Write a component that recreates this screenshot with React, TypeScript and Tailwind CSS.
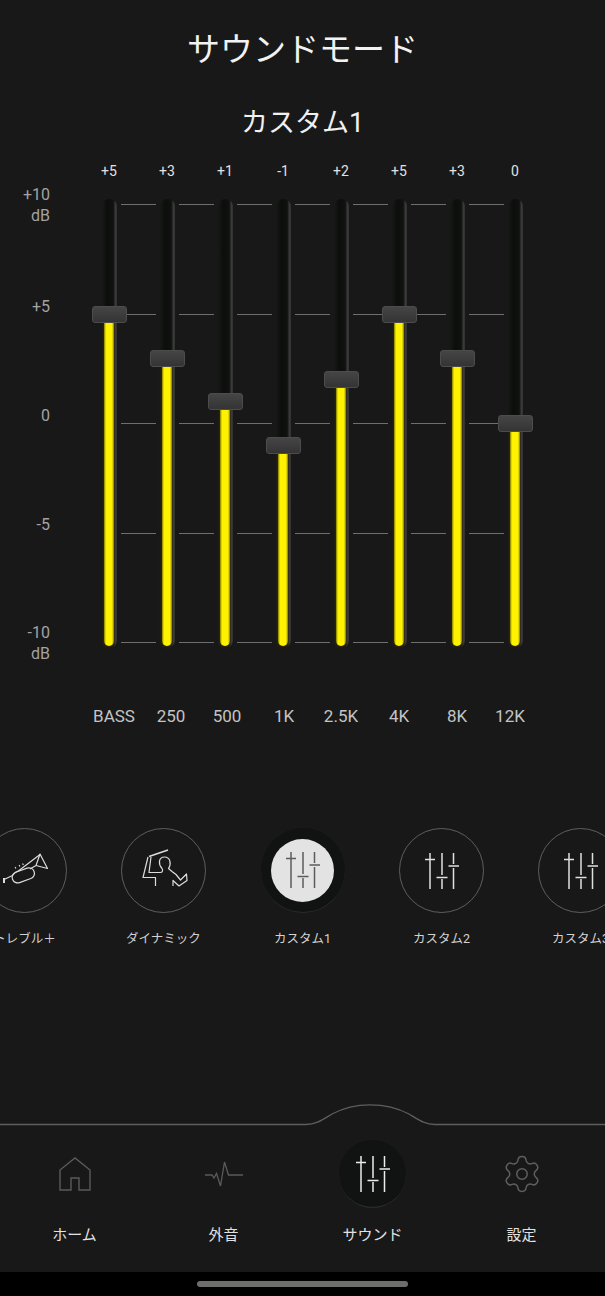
import { Settings } from "lucide-react";

const bands = [
  { value: 5, top: "+5", label: "BASS", labelW: "w-[58px]" },
  { value: 3, top: "+3", label: "250", labelW: "w-[56px]" },
  { value: 1, top: "+1", label: "500", labelW: "w-[56px]" },
  { value: -1, top: "-1", label: "1K", labelW: "w-[58px]" },
  { value: 2, top: "+2", label: "2.5K", labelW: "w-[56px]" },
  { value: 5, top: "+5", label: "4K", labelW: "w-[60px]" },
  { value: 3, top: "+3", label: "8K", labelW: "w-[56px]" },
  { value: 0, top: "0", label: "12K", labelW: "w-[50px]" },
];

function SlidersIcon({ className }: { className?: string }) {
  return (
    <svg width="36" height="36" viewBox="0 0 36 36" fill="none" stroke="currentColor" strokeWidth="1.5" className={className}>
      <path d="M6 0V36M18 0V22M18 26V36M29.5 0V11M29.5 15V36" />
      <path d="M1 6.5H11M12.5 24.5H23.5M24.5 13H35" />
    </svg>
  );
}

function TrumpetIcon() {
  return (
    <svg width="84" height="84" viewBox="0 0 84 84" fill="none" stroke="#dcdcdc" strokeWidth="1.2" strokeLinejoin="round" className="absolute inset-0">
      <path d="M57 25L64.5 39.5L53 36.5Z" />
      <path d="M57 25.5L36 41.5C33 42.5 31 44 29.5 46.5L21 50.5M53 36.5L47 40" />
      <rect x="29" y="41" width="23" height="11" rx="5.5" transform="rotate(-20 40 47)" />
      <path d="M21 49V54" strokeWidth="2" />
      <path d="M32 39L33 38.5M36 37L37 36.5M39.5 35.5L40.5 35" strokeWidth="1.8" />
    </svg>
  );
}

function DynamicIcon() {
  return (
    <svg width="84" height="84" viewBox="0 0 84 84" fill="none" stroke="#dcdcdc" strokeWidth="1.2" strokeLinejoin="round" className="absolute inset-0">
      <path d="M27 27.5L46 21" strokeWidth="1.6" />
      <path d="M26 28L21 48.5H33.5V57" />
      <path d="M29 28L27 43.5H38C41 43.5 41 41 40 39.5C36 35 36.5 28 42.5 28C48.5 28 49.5 35 46.5 39.5L50 42.5L54 45.5L58.5 51L64.5 45L65 51.5L57 57L51 51.5V57" />
    </svg>
  );
}

function ModeItem({ label, selected, icon }: { label: string; selected?: boolean; icon?: "trumpet" | "dynamic" }) {
  return (
    <div className="flex w-[139px] shrink-0 flex-col items-center">
      {selected ? (
        <div className="flex h-[85px] w-[84px] items-center justify-center rounded-full border-b border-[#2a2c2b] bg-[#111312]">
          <div className="flex h-[63px] w-[63px] items-center justify-center rounded-full bg-[#e3e3e3]">
            <SlidersIcon className="text-[#5c5c5c]" />
          </div>
        </div>
      ) : (
        <div className="relative flex h-[85px] w-[85px] items-center justify-center rounded-full border border-[#5e5e5e]">
          {icon === "trumpet" ? <TrumpetIcon /> : icon === "dynamic" ? <DynamicIcon /> : <SlidersIcon className="text-[#e0e0e0]" />}
        </div>
      )}
      <div className="mt-[16px] whitespace-nowrap text-[12.5px] leading-[20px] text-[#d2d2d2]">{label}</div>
    </div>
  );
}

function Track({ value }: { value: number }) {
  const knobTop = 224 - 21.8 * value - 8;
  return (
    <div className="relative h-[449px] w-[15px] shrink-0 rounded-full bg-[linear-gradient(90deg,#171917,#0c0e0c_35%,#101210_75%,#3a3a3a_90%,#303030)]">
      <div
        className="absolute bottom-[2px] left-[2px] w-[10px] rounded-b-full bg-[linear-gradient(90deg,#7d7700,#fff200_20%,#fff200_80%,#7d7700)] shadow-[0_1px_3px_#4a3a10]"
        style={{ top: knobTop + 10 }}
      />
      <div
        className="absolute left-[-10px] z-10 h-[17px] w-[35px] rounded-[3px] border border-[#4c4c4c] bg-[linear-gradient(180deg,#454545,#343434)]"
        style={{ top: knobTop }}
      />
    </div>
  );
}

export default function App() {
  return (
    <div
      className="flex h-[1296px] w-[605px] flex-col overflow-hidden bg-[#181818] text-white"
      style={{ fontFamily: 'Roboto, "Noto Sans CJK JP", sans-serif' }}
    >
      <h1 className="mt-[26px] text-center text-[33px] font-normal leading-[48px] text-[#f2f2f2]">サウンドモード</h1>
      <h2 className="mt-[29px] text-center text-[27px] font-normal leading-[40px] text-[#f0f0f0]">カスタム1</h2>

      {/* dB values */}
      <div className="mt-[18px] flex pl-[80px]">
        {bands.map((b, i) => (
          <div key={i} className="w-[58px] text-center text-[14px] leading-[20px] text-[#e2e2e2]">{b.top}</div>
        ))}
      </div>

      {/* equalizer */}
      <div className="mt-[3px] flex items-start">
        <div className="flex w-[50px] flex-col items-end text-[16px] leading-[21px] text-[#a3a3a3]">
          <div className="text-right">+10<br />dB</div>
          <div className="mt-[70px]">+5</div>
          <div className="mt-[88px]">0</div>
          <div className="mt-[88px]">-5</div>
          <div className="mt-[87px] text-right">-10<br />dB</div>
        </div>
        <div className="ml-[52px] mt-[15px] flex">
          {bands.map((b, i) => (
            <div key={i} className="flex">
              <Track value={b.value} />
              {i < bands.length - 1 && (
                <div className="flex h-[449px] w-[43px] flex-col justify-between px-[4px] pb-[5px] pt-[5px]">
                  {[0, 1, 2, 3, 4].map((n) => <div key={n} className="h-px bg-[#6e6e6e]" />)}
                </div>
              )}
            </div>
          ))}
        </div>
      </div>

      {/* band names */}
      <div className="mt-[41px] flex pl-[85px]">
        {bands.map((b, i) => (
          <div key={i} className={`${b.labelW} whitespace-nowrap text-center text-[17px] leading-[22px] text-[#c4c4c4]`}>{b.label}</div>
        ))}
      </div>

      {/* presets */}
      <div className="mt-[101px] flex justify-center">
        <ModeItem label="トレブル＋" icon="trumpet" />
        <ModeItem label="ダイナミック" icon="dynamic" />
        <ModeItem label="カスタム1" selected />
        <ModeItem label="カスタム2" />
        <ModeItem label="カスタム3" />
      </div>

      {/* bottom nav */}
      <div className="mt-auto">
        <svg width="605" height="22" viewBox="0 0 605 22" fill="none" className="block">
          <path d="M0 20.5H306C316 20.5 322 16 332 10C345 3 358 .8 370 .8C382 .8 396 3 409 10C419 16 425 20.5 435 20.5H605" stroke="#5e5e5e" strokeWidth="1.3" />
        </svg>
        <div className="mt-[14px] flex h-[68px]">
          <div className="flex w-[149px] items-center justify-center">
            <svg width="32" height="34" viewBox="0 0 32 34" fill="none" stroke="#5a5a5a" strokeWidth="1.4">
              <path d="M1 33V13L16 1L31 13V33H20V21H12V33Z" />
            </svg>
          </div>
          <div className="flex w-[149px] items-center justify-center">
            <svg width="38" height="26" viewBox="0 0 38 26" fill="none" stroke="#5a5a5a" strokeWidth="1.3">
              <path d="M0 14H7L9 17L11.5 12.5L15.5 25L19.5 1L23.5 14H38" />
            </svg>
          </div>
          <div className="flex w-[149px] items-center justify-center">
            <div className="flex h-[68px] w-[67px] items-center justify-center rounded-full border-b border-[#2c2e2d] bg-[#111312]">
              <SlidersIcon className="text-[#ececec]" />
            </div>
          </div>
          <div className="flex w-[149px] items-center justify-center">
            <Settings size={42} strokeWidth={0.85} color="#5f5f5f" />
          </div>
        </div>
        <div className="mt-[16px] flex h-[22px]">
          {["ホーム", "外音", "サウンド", "設定"].map((t) => (
            <div key={t} className="w-[149px] text-center text-[15px] leading-[22px] text-[#e2e2e2]">{t}</div>
          ))}
        </div>
        <div className="mt-[26px] flex h-[24px] justify-center bg-black pt-[9px]">
          <div className="h-[6px] w-[211px] rounded-full bg-[#6c6e6c]" />
        </div>
      </div>
    </div>
  );
}
